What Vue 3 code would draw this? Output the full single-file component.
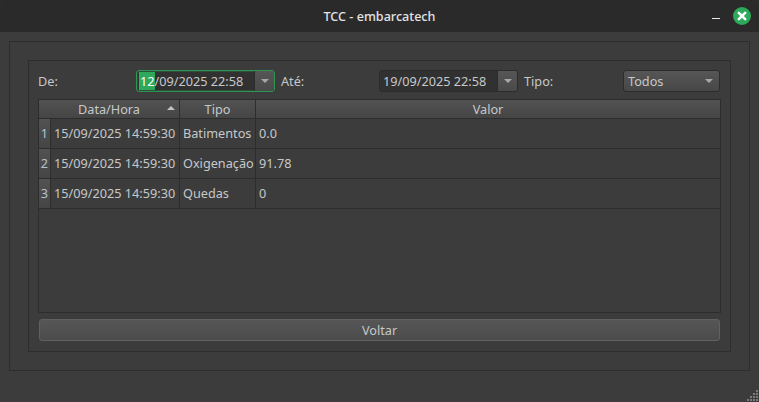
<template>
  <div class="window">
    <header class="titlebar">
      <span class="title">TCC - embarcatech</span>
      <div class="win-buttons">
        <span class="minimize"></span>
        <span class="close">
          <svg width="18" height="18" viewBox="0 0 18 18">
            <circle cx="9" cy="9" r="9" fill="#2ea85a" />
            <path d="M5.8 5.8l6.4 6.4M12.2 5.8l-6.4 6.4" stroke="#fff" stroke-width="2.6" stroke-linecap="round" />
          </svg>
        </span>
      </div>
    </header>
    <main class="content">
      <div class="outer-frame">
        <div class="inner-frame">
          <div class="filters">
            <label class="label">De:</label>
            <div class="date-edit focused">
              <span class="date-text"><span class="selected">12</span>/09/2025 22:58</span>
              <span class="spin"><i class="arrow"></i></span>
            </div>
            <label class="label">Até:</label>
            <div class="date-edit">
              <span class="date-text">19/09/2025 22:58</span>
              <span class="spin"><i class="arrow"></i></span>
            </div>
            <label class="label tipo">Tipo:</label>
            <div class="combo">
              <span>Todos</span>
              <i class="arrow"></i>
            </div>
          </div>

          <div class="table">
            <div class="thead">
              <div class="th th-date">Data/Hora<i class="sort"></i></div>
              <div class="th th-type">Tipo</div>
              <div class="th th-value">Valor</div>
            </div>
            <div v-for="(row, index) in rows" :key="index" class="tr">
              <div class="row-head">{{ index + 1 }}</div>
              <div class="td td-date">{{ row.date }}</div>
              <div class="td td-type">{{ row.type }}</div>
              <div class="td td-value">{{ row.value }}</div>
            </div>
          </div>

          <button class="back">Voltar</button>
        </div>
      </div>
    </main>
    <svg class="grip" width="12" height="12" viewBox="0 0 12 12">
      <g fill="#7b7b7b">
        <rect v-for="(dot, i) in gripDots" :key="i" :x="dot[0]" :y="dot[1]" width="2" height="2" />
      </g>
    </svg>
  </div>
</template>

<script setup>
const rows = [
  { date: '15/09/2025 14:59:30', type: 'Batimentos', value: '0.0' },
  { date: '15/09/2025 14:59:30', type: 'Oxigenação', value: '91.78' },
  { date: '15/09/2025 14:59:30', type: 'Quedas', value: '0' },
]

const gripDots = [
  [9, 0],
  [6, 3], [9, 3],
  [3, 6], [6, 6], [9, 6],
  [0, 9], [3, 9], [6, 9], [9, 9],
]
</script>

<style>
html, body {
  margin: 0;
  background: #2b2b2b;
}
</style>

<style scoped>
.window {
  position: relative;
  width: 759px;
  height: 402px;
  display: flex;
  flex-direction: column;
  background: #3c3c3c;
  color: #c6c8ca;
  font-family: "Noto Sans", "Open Sans", sans-serif;
  font-size: 12.7px;
  overflow: hidden;
  border-radius: 7px 7px 0 0;
}

.titlebar {
  height: 32px;
  flex: none;
  display: flex;
  align-items: center;
  justify-content: center;
  position: relative;
  background: #2a2a2a;
  color: #e2e4e6;
  font-size: 12.6px;
  font-weight: 500;
}

.win-buttons {
  position: absolute;
  right: 8px;
  top: 7px;
  display: flex;
  align-items: center;
  gap: 13px;
}

.minimize {
  width: 8px;
  height: 1px;
  margin-top: 4px;
  background: #e8e8e8;
}

.close {
  display: block;
  height: 18px;
}

.content {
  flex: 1;
  padding: 9px 9px 31px;
  min-height: 0;
  display: flex;
}

.outer-frame {
  flex: 1;
  padding: 18px;
  border: 1px solid #2d2d2d;
  display: flex;
}

.inner-frame {
  flex: 1;
  padding: 9px;
  border: 1px solid #2d2d2d;
  display: flex;
  flex-direction: column;
}

.filters {
  height: 22px;
  display: flex;
  align-items: center;
  margin-bottom: 7px;
}

.label {
  width: 92px;
  margin-right: 6px;
}

.tipo {
  width: 93px;
}

.date-edit {
  width: 139px;
  height: 22px;
  box-sizing: border-box;
  display: flex;
  margin-right: 6px;
  border: 1px solid #2c2c2c;
  border-radius: 3px;
  background: #313131;
}

.date-edit.focused {
  border-color: #2c9650;
  box-shadow: inset 0 0 0 1px rgba(44, 150, 80, 0.3);
}

.date-text {
  flex: 1;
  padding-left: 3px;
  line-height: 20px;
  white-space: nowrap;
}

.selected {
  display: inline-block;
  height: 18px;
  margin: 1px 0 0 -1px;
  padding-left: 1px;
  line-height: 18px;
  vertical-align: top;
  background: #2ea85a;
  color: #fff;
  box-shadow: inset 1px 0 0 #b45fb0;
}

.spin {
  width: 19px;
  display: flex;
  align-items: center;
  justify-content: center;
  background: linear-gradient(#565656, #4a4a4a);
  border-left: 1px solid #2c2c2c;
  border-radius: 0 2px 2px 0;
}

.arrow {
  width: 0;
  height: 0;
  border-left: 4px solid transparent;
  border-right: 4px solid transparent;
  border-top: 4px solid #a8a8a8;
}

.combo {
  width: 97px;
  height: 22px;
  box-sizing: border-box;
  display: flex;
  align-items: center;
  justify-content: space-between;
  padding: 0 6px 0 4px;
  border: 1px solid #2c2c2c;
  border-radius: 3px;
  background: linear-gradient(#565656, #474747);
}

.table {
  height: 214px;
  flex: none;
  box-sizing: border-box;
  border: 1px solid #2d2d2d;
}

.thead {
  height: 18px;
  display: flex;
  background: linear-gradient(#525252, #454545);
  border-bottom: 1px solid #2d2d2d;
}

.th {
  position: relative;
  text-align: center;
  line-height: 18px;
  border-right: 1px solid #2d2d2d;
  box-sizing: border-box;
}

.th-date {
  width: 141px;
}

.th-type {
  width: 76px;
}

.th-value {
  flex: 1;
  border-right: none;
}

.sort {
  position: absolute;
  right: 4px;
  top: 6px;
  width: 0;
  height: 0;
  border-left: 4px solid transparent;
  border-right: 4px solid transparent;
  border-bottom: 4px solid #c4c4c4;
}

.tr {
  height: 30px;
  box-sizing: border-box;
  display: flex;
  border-bottom: 1px solid #2d2d2d;
  line-height: 29px;
}

.row-head {
  width: 12px;
  box-sizing: border-box;
  flex: none;
  text-align: right;
  padding-right: 2px;
  background: linear-gradient(#525252, #454545);
  border-right: 1px solid #2d2d2d;
  color: #b4c2ce;
}

.td {
  box-sizing: border-box;
  padding-left: 3px;
  border-right: 1px solid #2d2d2d;
  white-space: nowrap;
  overflow: hidden;
}

.td-date {
  width: 129px;
}

.td-type {
  width: 76px;
}

.td-value {
  flex: 1;
  border-right: none;
}

.back {
  display: block;
  width: 681px;
  height: 22px;
  margin: 6px 0 0 1px;
  flex: none;
  padding: 0;
  border: 1px solid #616161;
  border-radius: 3px;
  background: linear-gradient(#565656, #4b4b4b);
  color: #c6c8ca;
  font: inherit;
}

.grip {
  position: absolute;
  right: 0;
  bottom: 0;
}
</style>
